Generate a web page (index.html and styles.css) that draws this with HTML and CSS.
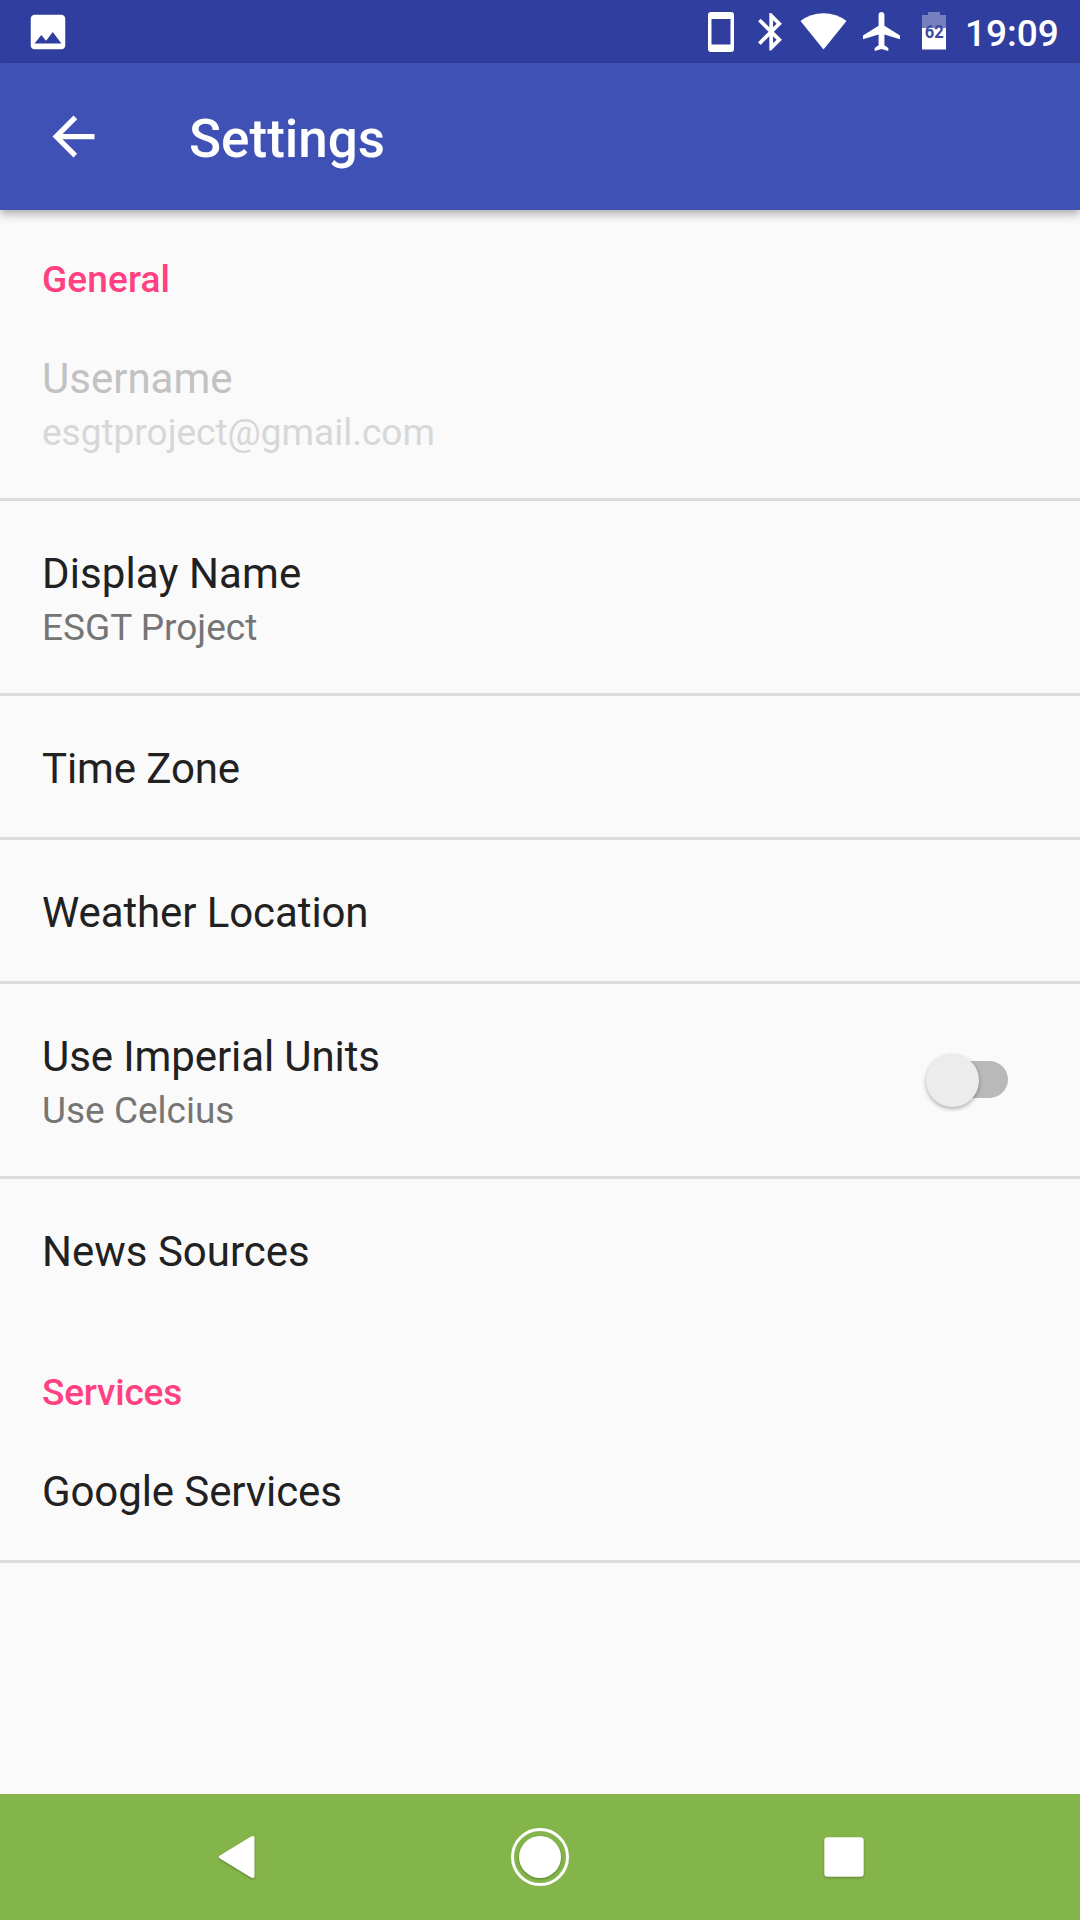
FILE: index.html
```html
<!DOCTYPE html>
<html lang="en">
<head>
<meta charset="utf-8">
<title>Settings</title>
<link rel="stylesheet" href="styles.css">
</head>
<body>
<div class="screen">
  <header class="status-bar">
    <svg class="icon-image" viewBox="0 0 24 24"><path d="M21 19V5c0-1.100-.9-2-2-2H5c-1.100 0-2 .9-2 2v14c0 1.100.9 2 2 2h14c1.100 0 2-.9 2-2zM8.500 13.500l2.500 3.010L14.500 12l4.500 6H5l3.500-4.500z"/></svg>
    <svg class="icon-phone" viewBox="0 0 26 40"><path fill-rule="evenodd" d="M3 0H23Q26 0 26 3V37Q26 40 23 40H3Q0 40 0 37V3Q0 0 3 0ZM3.500 7V32.500H22.500V7Z"/></svg>
    <svg class="icon-bluetooth" viewBox="5 2 12.710 20"><path d="M17.710 7.710L12 2h-1v7.590L6.410 5 5 6.410 10.590 12 5 17.590 6.410 19 11 14.410V22h1l5.710-5.710-4.300-4.290 4.300-4.290zM13 5.830l1.880 1.880L13 9.590V5.830zm1.880 10.460L13 18.170v-3.760l1.880 1.880z"/></svg>
    <svg class="icon-wifi" viewBox="0 0 47 37"><path d="M23.500 36.500L.5 8Q10.500 .3 23.500 .3T46.500 8Z"/></svg>
    <svg class="icon-plane" viewBox="2 2 19 20" preserveAspectRatio="none"><path d="M21 16v-2l-8-5V3.500c0-.83-.67-1.500-1.500-1.500S10 2.670 10 3.500V9l-8 5v2l8-2.500V19l-2 1.500V22l3.500-1 3.500 1v-1.500L13 19v-5.500l8 2.500z"/></svg>
    <svg class="icon-battery" viewBox="0 0 24 38"><path class="battery-empty" d="M0 3H6V0H18V3H24V16H0Z"/><path d="M0 16H24V37.500H0Z"/><text class="battery-level" x="2.700" y="26" textLength="19" lengthAdjust="spacingAndGlyphs">62</text></svg>
    <span class="clock">19:09</span>
  </header>

  <div class="app-bar">
    <svg class="back" viewBox="0 0 24 24"><path d="M20 11H7.830l5.590-5.590L12 4l-8 8 8 8 1.410-1.410L7.830 13H20v-2z"/></svg>
    <h1 class="title">Settings</h1>
  </div>

  <main class="settings">
    <h2 class="category loose">General</h2>
    <div class="row disabled">
      <div class="name">Username</div>
      <div class="summary">esgtproject@gmail.com</div>
    </div>
    <div class="row">
      <div class="name loose">Display Name</div>
      <div class="summary">ESGT Project</div>
    </div>
    <div class="row"><div class="name tight">Time Zone</div></div>
    <div class="row"><div class="name tight">Weather Location</div></div>
    <div class="row with-switch">
      <div>
        <div class="name tight">Use Imperial Units</div>
        <div class="summary">Use Celcius</div>
      </div>
      <div class="switch"><div class="thumb"></div></div>
    </div>
    <div class="row last"><div class="name">News Sources</div></div>
    <h2 class="category tighter">Services</h2>
    <div class="row"><div class="name tight">Google Services</div></div>
  </main>

  <nav class="nav-bar">
    <svg class="nav-icon" viewBox="0 0 64 64"><path d="M15.200 30L45.500 11.500Q49 9.800 49 13V51Q49 54.200 45.500 52.500L15.200 34Q11 32 15.200 30Z" transform="translate(1.500)"/></svg>
    <svg class="nav-icon" viewBox="0 0 64 64"><circle class="ring" cx="32" cy="32" r="27.500"/><circle class="dot" cx="32" cy="32" r="21"/></svg>
    <svg class="nav-icon" viewBox="0 0 64 64"><rect x="12.300" y="12.300" width="39.400" height="39.400" rx="3"/></svg>
  </nav>
</div>
</body>
</html>
```
FILE: styles.css
```css
* {
  box-sizing: border-box;
}

body {
  margin: 0;
  font-family: Roboto, sans-serif;
  background: #fafafa;
}

h1, h2 {
  margin: 0;
}

svg {
  display: block;
  flex: none;
  fill: #fff;
}

.screen {
  display: flex;
  flex-direction: column;
  width: 1080px;
  height: 1920px;
}

/* Status bar */
.status-bar {
  display: flex;
  align-items: flex-start;
  height: 63px;
  padding: 0 22px 0 24.500px;
  background: #303f9f;
}

.icon-image {
  width: 46px;
  height: 46px;
  margin: 8.500px auto 0 0;
}

.icon-phone {
  width: 26px;
  height: 40px;
  margin: 12px 24px 0 0;
}

.icon-bluetooth {
  width: 24px;
  height: 37.500px;
  margin: 13px 18px 0 0;
}

.icon-wifi {
  width: 47px;
  height: 37px;
  margin: 12.500px 16px 0 0;
}

.icon-plane {
  width: 37px;
  height: 39px;
  margin: 12px 22px 0 0;
}

.icon-battery {
  width: 24px;
  height: 38px;
  margin: 12px 19px 0 0;
}

.battery-empty {
  fill: #7680be;
}

.battery-level {
  fill: #3c4aa5;
  font-size: 18.500px;
  font-weight: 700;
}

.clock {
  width: 93px;
  margin-top: 12px;
  color: #fff;
  font-size: 37px;
  font-weight: 500;
  line-height: 43px;
}

/* App bar */
.app-bar {
  display: flex;
  align-items: flex-start;
  gap: 84px;
  height: 147px;
  padding: 0 42px;
  background: #3f51b5;
  box-shadow: 0 4px 9px rgba(0, 0, 0, 0.320);
}

.back {
  width: 63px;
  height: 63px;
  margin-top: 42px;
}

.title {
  margin-top: 45px;
  color: #fff;
  font-size: 53px;
  font-weight: 500;
  line-height: 62px;
}

/* Preference list */
.settings {
  flex: 1;
}

.category {
  height: 96px;
  padding: 48px 42px 0;
  color: #ff4081;
  font-size: 37px;
  font-weight: 500;
  line-height: 43px;
}

.row {
  padding: 48px 42px 44px;
  border-bottom: 3px solid #dcdcdc;
}

.row.last {
  border-color: transparent;
}

.name {
  color: #212121;
  font-size: 42px;
  line-height: 49px;
}

.summary {
  margin-top: 8px;
  color: #757575;
  font-size: 37px;
  line-height: 43px;
}

.loose {
  letter-spacing: 0.120px;
}

.tight {
  letter-spacing: -0.100px;
}

.tighter {
  letter-spacing: -0.200px;
}

.disabled .name {
  color: #c2c2c2;
}

.disabled .summary {
  color: #d7d7d7;
}

.with-switch {
  display: flex;
  justify-content: space-between;
}

.switch {
  display: flex;
  align-items: center;
  width: 76px;
  height: 37px;
  margin: 29px 30px 0 0;
  border-radius: 19px;
  background: #b9b9b9;
}

.thumb {
  flex: none;
  width: 53px;
  height: 53px;
  margin: 1px 0 0 -6.500px;
  border-radius: 50%;
  background: #ececec;
  box-shadow: 0 2px 4px rgba(0, 0, 0, 0.300);
}

/* Navigation bar */
.nav-bar {
  display: flex;
  justify-content: space-between;
  align-items: center;
  height: 126px;
  padding: 0 204px;
  background: #84b54a;
}

.nav-icon {
  width: 64px;
  height: 64px;
}

.nav-icon path,
.nav-icon rect,
.dot {
  filter: drop-shadow(0 1.500px 1px rgba(0, 0, 0, 0.300));
}

.ring {
  fill: none;
  stroke: #fff;
  stroke-width: 3;
}
```
